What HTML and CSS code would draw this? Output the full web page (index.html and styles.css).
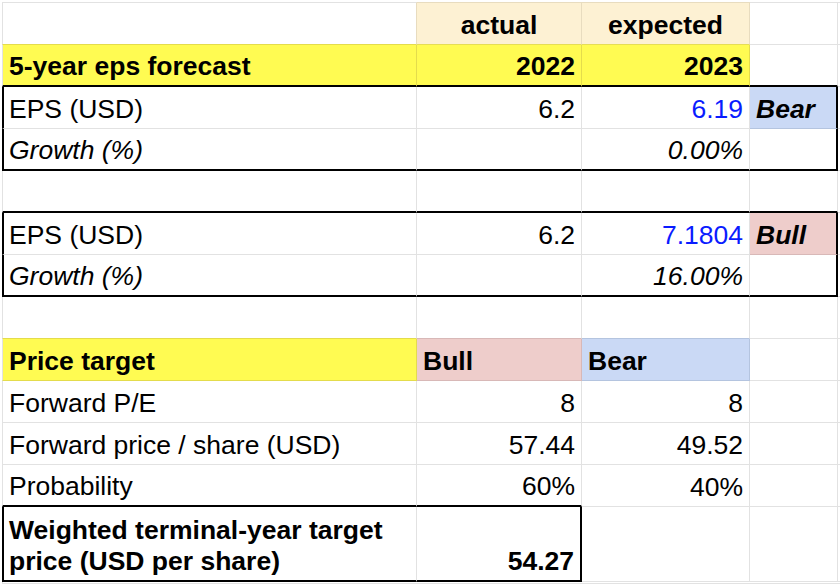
FILE: index.html
```html
<!DOCTYPE html>
<html>
<head>
<meta charset="utf-8">
<link rel="stylesheet" href="styles.css">
</head>
<body>
<div class="sheet">
  <!-- row 1 -->
  <div class="c first top ey-b eo-r"></div>
  <div class="c top org ctr b">actual</div>
  <div class="c top org ctr b">expected</div>
  <div class="c top"></div>
  <div class="c top stub"></div>
  <!-- row 2 -->
  <div class="c first yel b kb">5-year eps forecast</div>
  <div class="c yel r b kb">2022</div>
  <div class="c yel r b kb">2023</div>
  <div class="c kb"></div>
  <div class="c stub"></div>
  <!-- row 3 -->
  <div class="c first kl">EPS (USD)</div>
  <div class="c r">6.2</div>
  <div class="c r blue">6.19</div>
  <div class="c sky kr b i">Bear</div>
  <div class="c stub"></div>
  <!-- row 4 -->
  <div class="c first kl kb i">Growth (%)</div>
  <div class="c kb"></div>
  <div class="c r i kb">0.00%</div>
  <div class="c kr kb"></div>
  <div class="c stub"></div>
  <!-- row 5 -->
  <div class="c first kb"></div>
  <div class="c kb"></div>
  <div class="c kb"></div>
  <div class="c kb"></div>
  <div class="c stub"></div>
  <!-- row 6 -->
  <div class="c first kl">EPS (USD)</div>
  <div class="c r">6.2</div>
  <div class="c r blue">7.1804</div>
  <div class="c pink kr b i">Bull</div>
  <div class="c stub"></div>
  <!-- row 7 -->
  <div class="c first kl kb i">Growth (%)</div>
  <div class="c kb"></div>
  <div class="c r i kb">16.00%</div>
  <div class="c kr kb"></div>
  <div class="c stub"></div>
  <!-- row 8 -->
  <div class="c first ey-b"></div>
  <div class="c ep-b"></div>
  <div class="c es-b"></div>
  <div class="c"></div>
  <div class="c stub"></div>
  <!-- row 9 -->
  <div class="c first yel b">Price target</div>
  <div class="c pink b">Bull</div>
  <div class="c sky b">Bear</div>
  <div class="c"></div>
  <div class="c stub"></div>
  <!-- row 10 -->
  <div class="c first">Forward P/E</div>
  <div class="c r">8</div>
  <div class="c r">8</div>
  <div class="c"></div>
  <div class="c stub"></div>
  <!-- row 11 -->
  <div class="c first">Forward price / share (USD)</div>
  <div class="c r">57.44</div>
  <div class="c r">49.52</div>
  <div class="c"></div>
  <div class="c stub"></div>
  <!-- row 12 -->
  <div class="c first kb">Probability</div>
  <div class="c r kb">60%</div>
  <div class="c r">40%</div>
  <div class="c"></div>
  <div class="c stub"></div>
  <!-- row 13 -->
  <div class="c first kl kb b wrap">Weighted terminal-year target price (USD per share)</div>
  <div class="c r b kr kb">54.27</div>
  <div class="c"></div>
  <div class="c"></div>
  <div class="c stub"></div>
  <!-- row 14 -->
  <div class="c first stub"></div>
  <div class="c stub"></div>
  <div class="c stub"></div>
  <div class="c stub"></div>
  <div class="c stub"></div>
</div>
</body>
</html>
```

FILE: styles.css
```css
html, body {
  margin: 0;
  padding: 0;
  background: #ffffff;
  overflow: hidden;
}

body {
  width: 840px;
  height: 584px;
}

.sheet {
  margin: 2px 0 0 2px;
  display: grid;
  grid-template-columns: 415px 165px 168px 88px 2px;
  grid-template-rows: 43px repeat(11, 42px) 75px 2px;
  font-family: "Liberation Sans", Arial, sans-serif;
  font-size: 26.5px;
  line-height: 31px;
  color: #000;
}

.c {
  box-sizing: border-box;
  border-right: 1px solid #e2e2e2;
  border-bottom: 1px solid #e2e2e2;
  display: flex;
  align-items: flex-end;
  padding: 0 6px 3px 6px;
  white-space: nowrap;
  overflow: hidden;
  min-width: 0;
  min-height: 0;
}

.stub {
  padding: 0;
  border-right: 0;
}

.first { border-left: 1px solid #e2e2e2; }
.top { border-top: 1px solid #e2e2e2; }

.r { justify-content: flex-end; }
.ctr { justify-content: center; }
.b { font-weight: bold; }
.i { font-style: italic; }
.blue { color: #0a1cff; }

.wrap {
  white-space: normal;
}

.yel {
  background: #fffb52;
  border-right-color: #e4dc4c;
  border-bottom-color: #e4dc4c;
}
.org {
  background: #fdf1d3;
  border-right-color: #e8dcbf;
  border-bottom-color: #e6dd55;
  border-top-color: #e8dcbf;
}
.pink {
  background: #eecdcb;
  border-right-color: #d8b8b7;
  border-bottom-color: #d8b8b7;
}
.sky {
  background: #cad9f5;
  border-right-color: #b4c4df;
  border-bottom-color: #b4c4df;
}

.ey-b { border-bottom-color: #e4dc4c; }
.eo-r { border-right-color: #e8dcbf; }
.ep-b { border-bottom-color: #d8b8b7; }
.es-b { border-bottom-color: #b4c4df; }

.kb { border-bottom: 2px solid #000; }
.kl { border-left: 2px solid #000; padding-left: 5px; }
.kr { border-right: 2px solid #000; }
```
